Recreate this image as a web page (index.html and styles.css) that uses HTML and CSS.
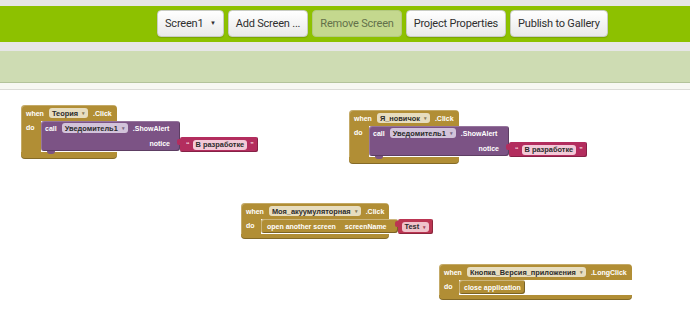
FILE: index.html
```html
<!DOCTYPE html>
<html lang="ru">
<head>
  <meta charset="UTF-8" />
  <meta name="viewport" content="width=device-width, initial-scale=1.0" />
  <title>Blocks</title>
  <link rel="stylesheet" href="styles.css">
</head>
<body>

  <div class="topline"></div>
  <header class="toolbar">
    <button class="btn">Screen1 <span class="caret">▼</span></button>
    <button class="btn">Add Screen ...</button>
    <button class="btn off">Remove Screen</button>
    <button class="btn">Project Properties</button>
    <button class="btn">Publish to Gallery</button>
  </header>
  <div class="gapline"></div>
  <div class="subbar"></div>
  <div class="strip"></div>

  <main class="workspace">

    <!-- Теория.Click -->
    <div class="ev b1">
      <div class="ev-head">
        <span>when</span>
        <span class="fld">Теория <i>▾</i></span>
        <span>.Click</span>
      </div>
      <div class="ev-body">
        <div class="ev-arm">do</div>
        <div class="ev-slot">
          <div class="chain">
            <div class="call">
              <div class="call-row">
                <span>call</span>
                <span class="fld">Уведомитель1 <i>▾</i></span>
                <span>.ShowAlert</span>
              </div>
              <div class="call-row arg">notice</div>
            </div>
            <div class="txt"><b>“</b><span class="fld">В разработке</span><b>”</b></div>
          </div>
        </div>
      </div>
      <div class="ev-foot"></div>
    </div>

    <!-- Я_новичок.Click -->
    <div class="ev b2">
      <div class="ev-head">
        <span>when</span>
        <span class="fld">Я_новичок <i>▾</i></span>
        <span>.Click</span>
      </div>
      <div class="ev-body">
        <div class="ev-arm">do</div>
        <div class="ev-slot">
          <div class="chain">
            <div class="call">
              <div class="call-row">
                <span>call</span>
                <span class="fld">Уведомитель1 <i>▾</i></span>
                <span>.ShowAlert</span>
              </div>
              <div class="call-row arg">notice</div>
            </div>
            <div class="txt"><b>“</b><span class="fld">В разработке</span><b>”</b></div>
          </div>
        </div>
      </div>
      <div class="ev-foot"></div>
    </div>

    <!-- Моя_акуумуляторная.Click -->
    <div class="ev b3">
      <div class="ev-head">
        <span>when</span>
        <span class="fld">Моя_акуумуляторная <i>▾</i></span>
        <span>.Click</span>
      </div>
      <div class="ev-body">
        <div class="ev-arm">do</div>
        <div class="ev-slot">
          <div class="chain mid">
            <div class="stmt">
              <span>open another screen</span>
              <span>screenName</span>
            </div>
            <div class="txt red"><span class="fld">Test <i>▾</i></span></div>
          </div>
        </div>
      </div>
      <div class="ev-foot thin"></div>
    </div>

    <!-- Кнопка_Версия_приложения.LongClick -->
    <div class="ev b4">
      <div class="ev-head">
        <span>when</span>
        <span class="fld">Кнопка_Версия_приложения <i>▾</i></span>
        <span>.LongClick</span>
      </div>
      <div class="ev-body">
        <div class="ev-arm">do</div>
        <div class="ev-slot">
          <div class="stmt">
            <span>close application</span>
          </div>
        </div>
      </div>
      <div class="ev-foot thin"></div>
    </div>

  </main>

</body>
</html>
```

FILE: styles.css
```css
body {
  margin: 0;
  width: 690px;
  height: 326px;
  overflow: hidden;
  background: #fff;
  font-family: 'Liberation Sans', Arial, sans-serif;
}

.topline {
  height: 6px;
  background: #e6e6e6;
}

.toolbar {
  height: 36px;
  background: #8dc100;
  display: flex;
  align-items: flex-start;
  gap: 4px;
  padding: 4px 0 0 157px;
  box-sizing: border-box;
}

.btn {
  height: 27px;
  padding: 0 7px;
  border: 1px solid #c9ccc4;
  border-radius: 4px;
  background: linear-gradient(#ffffff, #e9e9e9);
  box-shadow: 0 1px 1px rgba(0,0,0,0.15);
  font-family: Roboto, sans-serif;
  font-size: 11px;
  letter-spacing: -0.2px;
  color: #2f2f2f;
  white-space: nowrap;
}

.btn .caret {
  font-size: 6px;
  vertical-align: 2px;
  margin-left: 4px;
}

.btn.off {
  background: #c4d88e;
  border-color: #b3c97f;
  color: #63714a;
  box-shadow: none;
}

.gapline {
  height: 9px;
  background: #e6e6e6;
}

.subbar {
  height: 31px;
  background: #cedcb3;
  border-bottom: 1px solid #b3c39b;
}

.strip {
  height: 6px;
  background: #f7f8f3;
  border-bottom: 1px solid #dcdcd8;
}

.workspace {
  position: relative;
  height: 236px;
}

/* blocks */

.ev {
  position: absolute;
  color: #fff;
  font-size: 7px;
  font-weight: bold;
  white-space: nowrap;
}

.b1 { left: 21px; top: 15px; }
.b2 { left: 349px; top: 20px; }
.b3 { left: 241px; top: 113px; }
.b4 { left: 439px; top: 174px; }

.ev-head {
  display: flex;
  align-items: center;
  gap: 5px;
  height: 16px;
  padding: 0 5px;
  background: #b18e35;
  border-radius: 4px 4px 0 0;
  box-shadow: inset 1px 1px 0 rgba(255,255,255,0.25);
}

.ev-body {
  display: flex;
}

.ev-arm {
  width: 20px;
  box-sizing: border-box;
  padding: 3px 0 0 5px;
  background: #b18e35;
  box-shadow: inset 1px 0 0 rgba(255,255,255,0.25);
}

.ev-slot {
  width: 0;
}

.ev-foot {
  height: 7px;
  background: #b18e35;
  border-radius: 0 0 4px 4px;
  box-shadow: inset 0 -1px 0 rgba(0,0,0,0.25);
}

.ev-foot.thin {
  height: 5px;
}

.fld {
  display: flex;
  align-items: center;
  gap: 4px;
  height: 10px;
  padding: 0 3px;
  border-radius: 3px;
  background: #e7ddbf;
  color: #2b2b2b;
  font-size: 7.4px;
}

.fld i {
  font-style: normal;
  font-size: 5px;
  color: #8b7d5a;
}

.chain {
  display: flex;
  align-items: flex-start;
  width: max-content;
}

.chain.mid {
  align-items: center;
}

.call {
  display: flex;
  flex-direction: column;
  width: 139px;
  box-sizing: border-box;
  padding: 0 10px 0 4px;
  background: #7c5385;
  border-radius: 3px;
  box-shadow: inset 1px 1px 0 rgba(255,255,255,0.2), inset -1px -1px 0 rgba(0,0,0,0.25);
  position: relative;
}

.call::after {
  content: "";
  position: absolute;
  left: 6px;
  bottom: -3px;
  width: 8px;
  height: 3px;
  background: #7c5385;
  border-radius: 0 0 3px 3px;
}

.call-row {
  display: flex;
  align-items: center;
  gap: 5px;
  height: 12px;
  padding-top: 1px;
}

.call-row .fld {
  background: #d2c3da;
}

.call-row .fld i {
  color: #7c6a84;
}

.call-row.arg {
  justify-content: flex-end;
  height: 16px;
}

.b2 .call {
  width: 140px;
}

.txt {
  display: flex;
  align-items: center;
  gap: 3px;
  height: 15px;
  margin-top: 16px;
  padding: 0 4px 0 6px;
  background: #b32d5e;
  border-radius: 2px;
  box-shadow: inset -1px -1px 0 rgba(0,0,0,0.25);
  position: relative;
}

.txt::before {
  content: "";
  position: absolute;
  left: -3px;
  top: 2px;
  width: 3px;
  height: 6px;
  background: #b32d5e;
  border-radius: 2px 0 0 2px;
}

.txt b {
  color: #f2c7d6;
  font-size: 7px;
}

.txt .fld {
  background: #f3cad8;
}

.txt.red {
  margin-top: 0;
  padding: 0 4px;
  background: #bb3552;
}

.txt.red::before {
  background: #bb3552;
}

.txt.red .fld {
  background: #f0c3cb;
}

.txt.red .fld i {
  color: #a8495a;
}

.stmt {
  display: flex;
  align-items: center;
  gap: 9px;
  width: max-content;
  height: 14px;
  padding: 0 11px 0 6px;
  margin-bottom: 1px;
  background: #b18e35;
  border-radius: 3px;
  box-shadow: inset 1px 1px 0 rgba(255,255,255,0.35), inset -1px -1px 0 rgba(0,0,0,0.3);
}

.b4 .stmt {
  padding: 0 4px 0 5px;
}
```
